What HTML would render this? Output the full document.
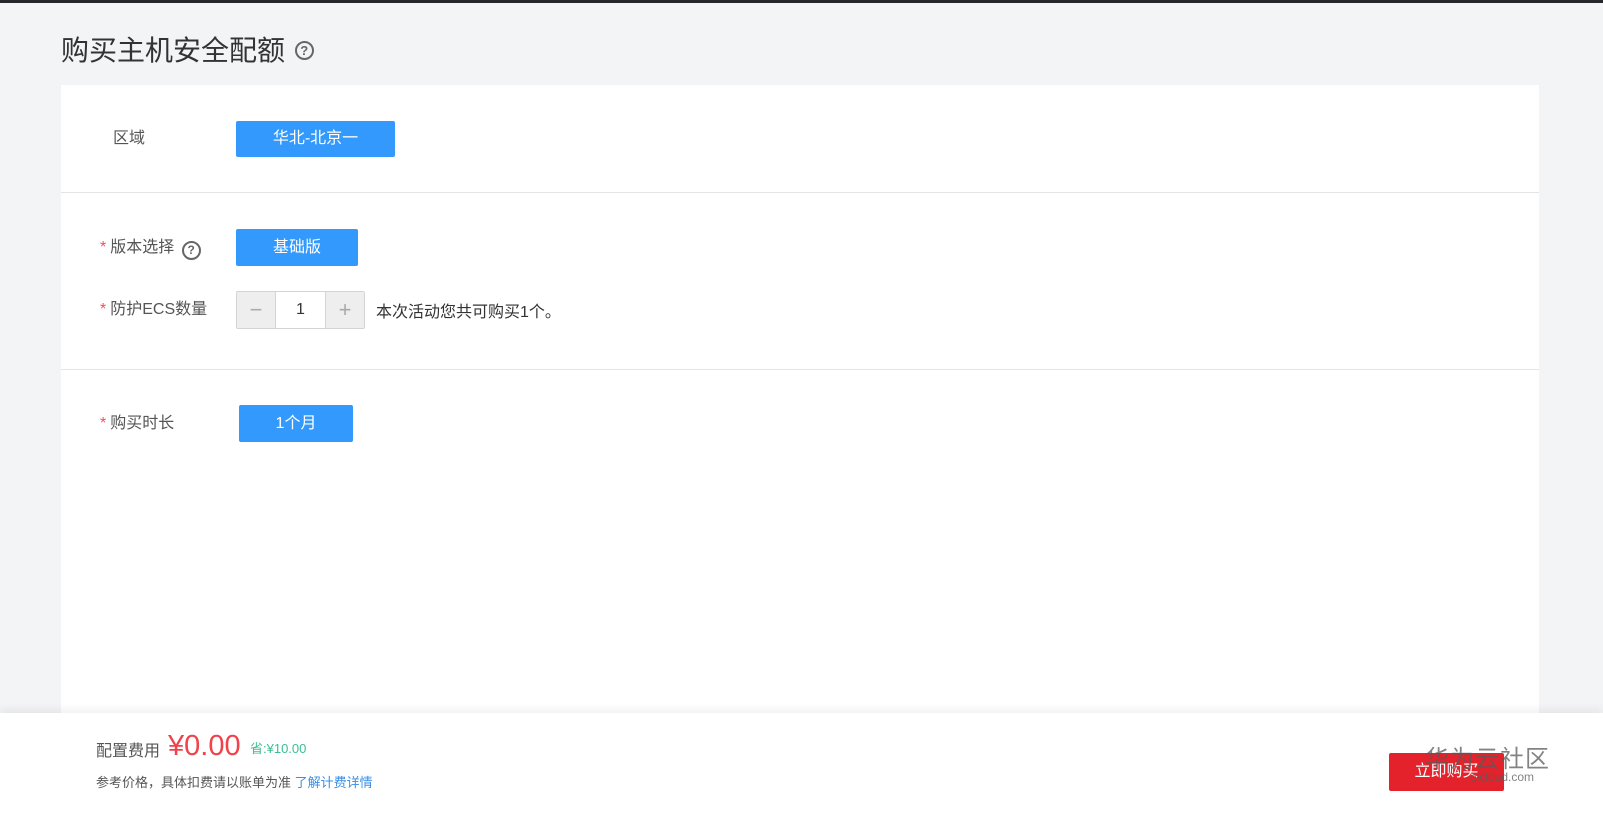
<!DOCTYPE html>
<html><head><meta charset="utf-8"><style>
*{margin:0;padding:0;box-sizing:border-box}
body{width:1603px;height:820px;background:#f3f4f6;font-family:"Liberation Sans","Noto Sans CJK SC",sans-serif;position:relative;overflow:hidden;color:#333}
.a{position:absolute}
.top{left:0;top:0;width:1603px;height:3px;background:#25272b}
.title{left:61px;top:32px;font-size:28px;color:#333;line-height:38px}
.q{display:inline-block;border:2px solid #666;border-radius:50%;text-align:center;font-weight:bold;color:#666}
.panel{left:61px;top:85px;width:1478px;height:640px;background:#fff}
.hr{left:61px;width:1478px;height:1px;background:#e3e4e6}
.lbl{font-size:16px;color:#555;line-height:20px}
.star{color:#f5514f;margin-right:4px}
.btn{background:#3399fd;color:#fff;font-size:16px;text-align:center;border-radius:2px}
.foot{left:0;top:713px;width:1603px;height:107px;background:#fff;box-shadow:0 -4px 8px rgba(0,0,0,.06)}
</style></head><body>
<div class="a top"></div>
<div class="a title">购买主机安全配额 <span class="q" style="width:19px;height:19px;font-size:13px;line-height:15px;vertical-align:5px;margin-left:2px">?</span></div>
<div class="a panel"></div>
<div class="a hr" style="top:192px"></div>
<div class="a hr" style="top:369px"></div>
<div class="a lbl" style="left:113px;top:129px">区域</div>
<div class="a btn" style="left:236px;top:121px;width:159px;height:36px;line-height:36px">华北-北京一</div>
<div class="a lbl" style="left:100px;top:238px"><span class="star">*</span>版本选择 <span class="q" style="width:19px;height:19px;font-size:12px;line-height:15px;margin-left:3px;vertical-align:-2px">?</span></div>
<div class="a btn" style="left:236px;top:229px;width:122px;height:37px;line-height:37px">基础版</div>
<div class="a lbl" style="left:100px;top:300px"><span class="star">*</span>防护ECS数量</div>
<div class="a" style="left:236px;top:291px;width:129px;height:38px;border:1px solid #d4d4d4;border-radius:2px;display:flex;background:#fff">
<div style="width:39px;background:#eee;border-right:1px solid #d4d4d4;text-align:center;line-height:36px;font-size:22px;color:#aaa">−</div>
<div style="flex:1;text-align:center;line-height:36px;font-size:16px">1</div>
<div style="width:39px;background:#eee;border-left:1px solid #d4d4d4;text-align:center;line-height:36px;font-size:22px;color:#aaa">+</div></div>
<div class="a lbl" style="left:376px;top:303px;color:#333">本次活动您共可购买1个。</div>
<div class="a lbl" style="left:100px;top:414px"><span class="star">*</span>购买时长</div>
<div class="a btn" style="left:239px;top:405px;width:114px;height:37px;line-height:37px">1个月</div>
<div class="a foot"></div>
<div class="a" style="left:96px;top:737px;font-size:16px;color:#555">配置费用</div>
<div class="a" style="left:168px;top:728px;font-size:29px;color:#f0424b;line-height:36px">¥0.00</div>
<div class="a" style="left:250px;top:738px;font-size:13px;color:#3bbf8f">省:¥10.00</div>
<div class="a" style="left:96px;top:772px;font-size:13px;color:#555">参考价格，具体扣费请以账单为准 <span style="color:#3a8ee6">了解计费详情</span></div>
<div class="a" style="left:1389px;top:753px;width:115px;height:38px;background:#e4222c;border-radius:2px;color:#fff;font-size:16px;text-align:center;line-height:38px">立即购买</div>
<div class="a" style="left:1425px;top:739px;font-size:24px;color:rgba(90,90,90,.75);letter-spacing:1px">华为云社区</div>
<div class="a" style="left:1470px;top:770px;font-size:12px;color:rgba(90,90,90,.75)">eicloud.com</div>
</body></html>
